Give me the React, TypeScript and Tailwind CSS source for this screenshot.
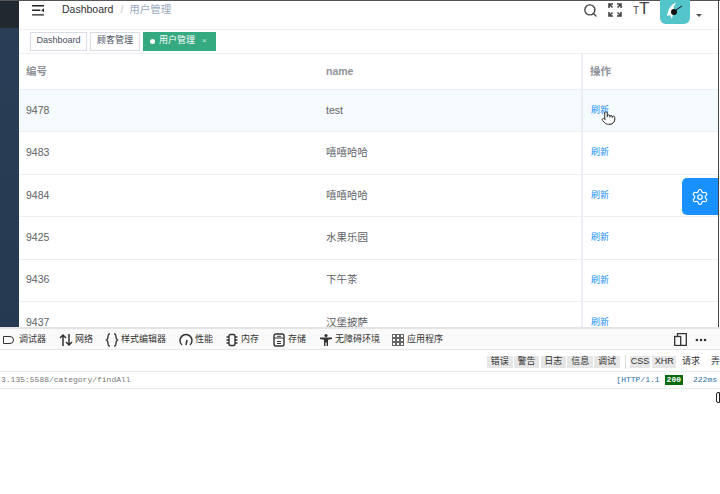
import React from 'react';
import { Search, Settings, Pointer, MoreHorizontal } from 'lucide-react';

const rows = [
  { id: '9478', name: 'test', active: true },
  { id: '9483', name: '嘻嘻哈哈' },
  { id: '9484', name: '嘻嘻哈哈' },
  { id: '9425', name: '水果乐园' },
  { id: '9436', name: '下午茶' },
  { id: '9437', name: '汉堡披萨' },
];

const sv = 'w-[14px] h-[14px] shrink-0';

const tools = [
  {
    label: '网络',
    ml: 'ml-[13px]',
    icon: (
      <svg viewBox="0 0 14 14" className={sv} fill="none" stroke="#333" strokeWidth="1.5">
        <path d="M4 13V2M1 5l3-3 3 3M10 1v11M7 9l3 3 3-3" />
      </svg>
    ),
  },
  {
    label: '样式编辑器',
    ml: 'ml-[12px]',
    icon: (
      <svg viewBox="0 0 14 14" className={sv} fill="none" stroke="#333" strokeWidth="1.4">
        <path d="M5 1C3 1 3 2 3 4S3 6 1.5 7C3 8 3 8 3 10s0 3 2 3M9 1c2 0 2 1 2 3s0 2 1.500 3C11 8 11 8 11 10s0 3-2 3" />
      </svg>
    ),
  },
  {
    label: '性能',
    ml: 'ml-[13px]',
    icon: (
      <svg viewBox="0 0 14 14" className={sv} fill="none" stroke="#333" strokeWidth="1.5">
        <path d="M3 12A6 6 0 1 1 11 12M7 12l1-5" />
      </svg>
    ),
  },
  {
    label: '内存',
    ml: 'ml-[12px]',
    icon: (
      <svg viewBox="0 0 14 14" className={sv} fill="none" stroke="#333" strokeWidth="1.4">
        <rect x="4" y="1.500" width="6" height="11" rx="1.500" />
        <path d="M1.500 4h2.500M1.500 7h2.500M1.500 10h2.500M10 4h2.500M10 7h2.500M10 10h2.500" />
      </svg>
    ),
  },
  {
    label: '存储',
    ml: 'ml-[13px]',
    icon: (
      <svg viewBox="0 0 14 14" className={sv} fill="none" stroke="#333" strokeWidth="1.4">
        <rect x="2" y="1" width="10" height="12" rx="2" />
        <path d="M2 5h10M5 3.300h4M5 8.500h4M5 10.500h4" strokeWidth="1" />
      </svg>
    ),
  },
  {
    label: '无障碍环境',
    ml: 'ml-[13px]',
    icon: (
      <svg viewBox="0 0 14 14" className={sv} fill="#333">
        <circle cx="7" cy="2.500" r="1.600" />
        <path d="M1 4.500h12v1.500l-4 .700V13H7.600V9.500H6.400V13H5V6.700L1 6z" />
      </svg>
    ),
  },
  {
    label: '应用程序',
    ml: 'ml-[11px]',
    icon: (
      <svg viewBox="0 0 14 14" className={sv} fill="none" stroke="#666" strokeWidth="1">
        {[1.500, 5.500, 9.500].map((y) =>
          [1.500, 5.500, 9.500].map((x) => <rect key={`${x}-${y}`} x={x} y={y} width="3" height="3" />)
        )}
      </svg>
    ),
  },
];

const App: React.FC = () => {
  return (
    <div className="relative w-[720px] h-[494px] overflow-hidden bg-white font-['Liberation_Sans','Noto_Sans_CJK_SC',sans-serif]">
      <div className="flex h-[327px] border-t border-[#555]">
        {/* sidebar */}
        <div className="w-[19px] shrink-0 flex flex-col">
          <div className="h-[27px] bg-[#22282f]" />
          <div className="flex-1 bg-gradient-to-b from-[#2a3f57] to-[#253a50]" />
        </div>

        <div className="flex-1 min-w-0 flex flex-col">
          {/* navbar */}
          <div className="h-[28px] shrink-0 flex items-center pl-[13px] pr-[18px] pb-[10px]">
            <svg viewBox="0 0 14 12" className="w-[13px] h-[11px]" fill="#222">
              <path d="M0 0h13v1.500H0zM0 5h9v1.500H0zM0 10h13v1.500H0zM13 3.500v4.500l-3-2.200z" />
            </svg>
            <span className="ml-[17px] text-[10.5px] text-[#303133]">Dashboard</span>
            <span className="ml-[7px] text-[10.5px] text-[#c0c4cc]">/</span>
            <span className="ml-[6px] text-[10.5px] text-[#97a8be]">用户管理</span>
            <div className="ml-auto flex items-center">
              <Search className="w-[15px] h-[15px] text-[#444]" strokeWidth={2.2} />
              <svg viewBox="0 0 14 14" className="ml-[10px] w-[14px] h-[14px]" fill="none" stroke="#444" strokeWidth="1.600">
                <path d="M1 5V1h4M9 1h4v4M13 9v4H9M5 13H1V9M1 1l3.500 3.500M13 1L9.500 4.500M13 13L9.500 9.500M1 13l3.500-3.500" />
              </svg>
              <span className="ml-[11px] w-[16px] text-[17px] leading-[16px] text-[#444] whitespace-nowrap">
                <span className="text-[10px]">T</span>T
              </span>
              <div className="ml-[11px] mt-[3px] w-[30px] h-[24px] rounded-b-[6px] bg-[#55c5cc] overflow-hidden">
                <svg viewBox="0 0 30 24" className="w-[30px] h-[24px]">
                  <path d="M7 16 C8 9 11 4 16 3 C14 6 13 8 14 9 L12 19 L10 15 Z" fill="#fff" />
                  <circle cx="14" cy="12" r="3" fill="#111" />
                  <path d="M16 10 L22 6" stroke="#111" strokeWidth="1" />
                </svg>
              </div>
              <span className="ml-[6px] mt-[10px] w-0 h-0 border-x-[3px] border-x-transparent border-t-[3px] border-t-[#555]" />
            </div>
          </div>

          {/* tags */}
          <div className="h-[25px] shrink-0 flex items-center gap-[3px] pl-[11px] pb-[1px] border-t border-[#f0f0f0] border-b">
            <div className="h-[19px] w-[57px] flex items-center justify-center border border-[#d8dce5] text-[9px] text-[#495060]">Dashboard</div>
            <div className="h-[19px] w-[50px] flex items-center justify-center border border-[#d8dce5] text-[9px] text-[#495060]">顾客管理</div>
            <div className="h-[19px] w-[73px] pl-[7px] flex items-center bg-[#35a97f] text-[9px] text-white">
              <span className="w-[5px] h-[5px] rounded-full bg-white mr-[4px]" />
              用户管理
              <span className="ml-[7px] text-[8px] text-[#d8f0e6]">×</span>
            </div>
          </div>

          {/* table */}
          <div className="grid grid-cols-[300px_262px_138px] auto-rows-min text-[10.5px] text-[#606266] flex-1 overflow-hidden">
            <div className="h-[36px] pl-[7px] flex items-center font-bold text-[#909399] border-b border-[#ebeef5]">编号</div>
            <div className="h-[36px] pl-[7px] flex items-center font-bold text-[#909399] border-b border-[#ebeef5]">name</div>
            <div className="h-[36px] pl-[7px] flex items-center font-bold text-[#909399] border-b border-l-2 border-[#ebeef5]">操作</div>
            {rows.map((row) => (
              <React.Fragment key={row.id}>
                <div className={`h-[42.4px] pl-[7px] flex items-center border-b border-[#f0eef0] ${row.active ? 'bg-[#f5fafd]' : ''}`}>{row.id}</div>
                <div className={`h-[42.4px] pl-[7px] flex items-center border-b border-[#f0eef0] ${row.active ? 'bg-[#f5fafd]' : ''}`}>{row.name}</div>
                <div className={`h-[42.4px] pl-[8px] flex items-center border-b border-l-2 border-b-[#f0eef0] border-l-[#ebeef5] text-[9px] text-[#1890ff] ${row.active ? 'bg-[#f5fafd]' : ''}`}>刷新</div>
              </React.Fragment>
            ))}
          </div>
        </div>
      </div>

      {/* settings float */}
      <div className="absolute left-[682px] top-[178px] w-[36px] h-[37px] rounded-l-[5px] bg-[#1890ff] flex items-center justify-center">
        <Settings className="w-[18px] h-[18px] text-white" strokeWidth={1.6} />
      </div>

      {/* mouse pointer */}
      <div className="absolute left-[601px] top-[110px]">
        <Pointer className="w-[15px] h-[16px] text-[#222] fill-white" strokeWidth={1.5} />
      </div>

      {/* devtools */}
      <div className="flex flex-col border-t-2 border-[#e4e4e4]">
        <div className="h-[21px] flex items-center pl-[3px] pt-[1px] pr-[12px] text-[9px] text-[#333] bg-[#fafafa] border-b border-[#e8e8e8]">
          <span className="w-[11px] h-[8px] rounded-r-full border-[1.5px] border-[#333]" />
          <span className="ml-[5px]">调试器</span>
          {tools.map((t) => (
            <span key={t.label} className={`${t.ml} flex items-center gap-[2px]`}>
              {t.icon}
              {t.label}
            </span>
          ))}
          <svg viewBox="0 0 13 13" className="ml-auto w-[13px] h-[13px]" fill="none" stroke="#333" strokeWidth="1.300">
            <rect x="0.700" y="3.500" width="6" height="9" />
            <path d="M3.500 3.500V0.700h8.800v11.800H6.700" />
          </svg>
          <MoreHorizontal className="ml-[7px] w-[14px] h-[14px] text-[#333]" strokeWidth={2.5} />
        </div>
        <div className="h-[22px] flex items-center pl-[487px] pt-[2px] text-[9px] text-[#333] border-b border-[#e8e8e8] overflow-hidden whitespace-nowrap">
          <div className="flex gap-[1.3px]">
            {['错误', '警告', '日志', '信息', '调试'].map((f) => (
              <span key={f} className="w-[25.500px] h-[12px] flex items-center justify-center bg-[#e6e6e6]">{f}</span>
            ))}
          </div>
          <span className="ml-[5px] w-px h-[14px] bg-[#ddd]" />
          <span className="ml-[4px] w-[23px] h-[12px] flex items-center justify-center bg-[#e6e6e6]">CSS</span>
          <span className="ml-[2px] w-[26px] h-[12px] flex items-center justify-center bg-[#e6e6e6]">XHR</span>
          <span className="ml-[6px] shrink-0">请求</span>
          <span className="ml-[11px] shrink-0">弄</span>
        </div>
        <div className="h-[17px] flex items-center justify-between border-b border-[#e8e8e8] font-['Liberation_Mono',monospace] text-[8px]">
          <span className="pl-[1px] text-[#777]">3.135:5588/category/findAll</span>
          <span className="flex items-center pr-[3px] whitespace-nowrap text-[#2a6fa8]">
            [HTTP/1.1
            <span className="ml-[5px] px-[2px] bg-[#0a6b0a] text-white font-bold leading-[10px]">200</span>
            <span className="ml-[10px]">222ms</span>
          </span>
        </div>
      </div>
      <div className="absolute left-[716px] top-[392px] w-[4px] h-[11px] border border-[#222] rounded-l-[2px]" />
      <div className="absolute left-[718px] top-0 w-[1px] h-[327px] bg-[#444]" />
    </div>
  );
};

export default App;
